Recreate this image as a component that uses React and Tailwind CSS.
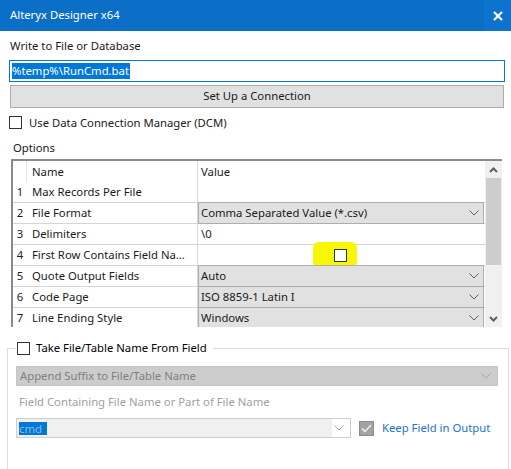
import React from "react";

const font = { fontFamily: '"Noto Sans", "Liberation Sans", sans-serif' };

function Chevron({ className = "", color = "#606060" }) {
  return (
    <svg width="10" height="6" viewBox="0 0 10 6" className={className}>
      <path d="M0.5 0.5 L5 5 L9.5 0.5" fill="none" stroke={color} strokeWidth="1" />
    </svg>
  );
}

function ScrollArrow({ up }) {
  return (
    <svg width="9" height="6" viewBox="0 0 9 6">
      <path
        d={up ? "M1 5 L4.5 1.5 L8 5" : "M1 1 L4.5 4.5 L8 1"}
        fill="none"
        stroke="#606060"
        strokeWidth="2"
      />
    </svg>
  );
}

function Box({ className = "" }) {
  return <div className={"w-[13px] h-[13px] border border-[#333] bg-white " + className} />;
}

const rows = [
  { n: 1, name: "Max Records Per File", kind: "text", value: "" },
  { n: 2, name: "File Format", kind: "select", value: "Comma Separated Value (*.csv)" },
  { n: 3, name: "Delimiters", kind: "text", value: "\\0" },
  { n: 4, name: "First Row Contains Field Na...", kind: "check" },
  { n: 5, name: "Quote Output Fields", kind: "select", value: "Auto" },
  { n: 6, name: "Code Page", kind: "select", value: "ISO 8859-1 Latin I" },
  { n: 7, name: "Line Ending Style", kind: "select", value: "Windows" },
];

function OptionRow({ row }) {
  return (
    <div className="flex h-[21px] border-b border-[#d4d4d4] shrink-0">
      <div className="w-[14px] text-center leading-[20px] text-[#222]">{row.n}</div>
      <div className="w-[171px] pl-[5px] leading-[20px] border-r border-[#d8d8d8] whitespace-nowrap overflow-hidden">
        {row.name}
      </div>
      <div className="w-[286px] relative">
        {row.kind === "select" && (
          <div className="-mt-px h-[22px] bg-[#e1e1e1] border border-[#adadad] flex items-center pl-[2px] pr-[4px]">
            <span className="flex-1 leading-[20px]">{row.value}</span>
            <Chevron />
          </div>
        )}
        {row.kind === "text" && <div className="pl-[3px] leading-[20px]">{row.value}</div>}
        {row.kind === "check" && (
          <>
            <div className="absolute left-[115px] top-[-3px] w-[44px] h-[26px] bg-[#f7f700] rounded-[6px]" />
            <Box className="absolute left-[136px] top-[4px] bg-transparent" />
          </>
        )}
      </div>
    </div>
  );
}

export default function App() {
  return (
    <div className="w-[511px] h-[469px] bg-white overflow-hidden text-[11.3px] text-[#1a1a1a]" style={font}>
      <div className="h-[31px] bg-[#0c6fc7] flex items-center text-white">
        <span className="pl-[10px] flex-1">Alteryx Designer x64</span>
        <div className="w-[27px] h-full bg-[#0e73cc] flex items-center justify-center">
          <svg width="10" height="10" viewBox="0 0 10 10">
            <path d="M1 1 L9 9 M9 1 L1 9" stroke="white" strokeWidth="2.2" />
          </svg>
        </div>
      </div>

      <div className="mt-[7px] ml-[10px] h-[16px] leading-[16px]">Write to File or Database</div>

      <div className="mt-[6px] ml-[9px] w-[496px] h-[22px] border border-[#0078d7] flex items-center pl-[2px]">
        <span className="bg-[#0078d7] text-white leading-[16px] pr-px">%temp%\RunCmd.bat</span>
      </div>

      <button className="mt-[3px] ml-[10px] w-[494px] h-[23px] bg-[#e1e1e1] border border-[#adadad] flex items-center justify-center">
        Set Up a Connection
      </button>

      <div className="mt-[8px] ml-[9px] flex items-center h-[13px] gap-[7px]">
        <Box />
        <span className="leading-[16px]">Use Data Connection Manager (DCM)</span>
      </div>

      <div className="mt-[11px] ml-[13px] h-[16px] leading-[16px]">Options</div>

      <div className="mt-[3px] ml-[11px] w-[491px] h-[168px] border-t-2 border-l-2 border-[#8a8a8a] flex overflow-hidden">
        <div className="flex-1 flex flex-col">
          <div className="flex h-[21px] shrink-0">
            <div className="w-[14px] border-r border-[#e4e4e4]" />
            <div className="w-[171px] pl-[5px] leading-[21px] border-r border-[#d8d8d8]">Name</div>
            <div className="pl-[3px] leading-[21px]">Value</div>
          </div>
          {rows.map((r) => (
            <OptionRow key={r.n} row={r} />
          ))}
        </div>
        <div className="w-[17px] bg-[#f0f0f0] flex flex-col shrink-0">
          <div className="h-[17px] flex items-center justify-center">
            <ScrollArrow up />
          </div>
          <div className="mx-[1px] h-[87px] bg-[#cdcdcd]" />
          <div className="flex-1" />
          <div className="h-[17px] flex items-center justify-center">
            <ScrollArrow />
          </div>
        </div>
      </div>

      <fieldset className="mt-[13px] ml-[7px] w-[502px] h-[140px] border border-[#dcdcdc]">
        <legend className="ml-[8px] pl-[1px] pr-[6px] h-[16px] flex items-center gap-[6px]">
          <Box />
          <span className="leading-[16px] text-black">Take File/Table Name From Field</span>
        </legend>

        <div className="mt-[10px] ml-[8px] w-[482px] h-[20px] bg-[#cccccc] border border-[#c4c4c4] flex items-center pl-[3px] pr-[6px]">
          <span className="flex-1 text-[#808080]">Append Suffix to File/Table Name</span>
          <Chevron color="#a8a8a8" />
        </div>

        <div className="mt-[8px] ml-[11px] h-[16px] leading-[16px] text-[#a0a0a0]">
          Field Containing File Name or Part of File Name
        </div>

        <div className="mt-[8px] ml-[8px] flex items-center">
          <div className="w-[335px] h-[20px] border border-[#cfcfcf] flex items-center pr-[4px]">
            <div className="w-[315px] h-full bg-[#f0f0f0] flex items-center pl-[2px]">
              <span className="bg-[#0078d7] text-[#8fb8e0] leading-[13px] pr-[5px]">cmd</span>
            </div>
            <div className="flex-1 flex justify-center">
              <Chevron color="#a8a8a8" />
            </div>
          </div>
          <div className="ml-[8px] w-[15px] h-[15px] bg-[#a2a2a2] border border-[#8c8c8c] flex items-center justify-center">
            <svg width="11" height="9" viewBox="0 0 11 9">
              <path d="M1 4.5 L4 7.5 L10 1" fill="none" stroke="#e8e8e8" strokeWidth="1.8" />
            </svg>
          </div>
          <span className="ml-[8px] text-[#1a73d1]">Keep Field in Output</span>
        </div>
      </fieldset>
    </div>
  );
}
